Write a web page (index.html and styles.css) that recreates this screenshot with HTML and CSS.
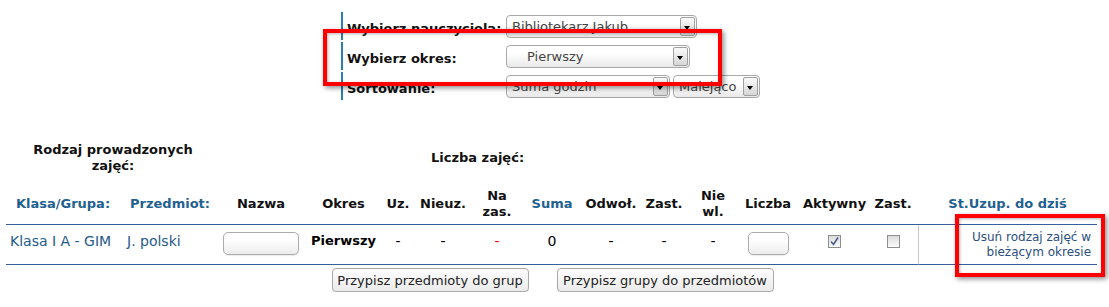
FILE: index.html
```html
<!DOCTYPE html>
<html lang="pl">

<head>
    <meta charset="UTF-8">
    <title>Rodzaje zajęć</title>
    <link rel="stylesheet" href="styles.css">
</head>

<body>
    <!-- Filtry -->
    <div class="filters">
        <div class="filter-label">Wybierz nauczyciela:</div>
        <div class="filter-field">
            <div class="dropdown teacher"><span class="value">Bibliotekarz Jakub</span><span class="arrow"></span></div>
        </div>
        <div class="filter-label">Wybierz okres:</div>
        <div class="filter-field">
            <div class="dropdown period"><span class="value indent">Pierwszy</span><span class="arrow"></span></div>
        </div>
        <div class="filter-label">Sortowanie:</div>
        <div class="filter-field">
            <div class="dropdown sort"><span class="value">Suma godzin</span><span class="arrow"></span></div>
            <div class="dropdown order"><span class="value">Malejąco</span><span class="arrow"></span></div>
        </div>
    </div>

    <table class="lessons">
        <colgroup>
            <col style="width: 114px">
            <col style="width: 100px">
            <col style="width: 82px">
            <col style="width: 83px">
            <col style="width: 26px">
            <col style="width: 64px">
            <col style="width: 44px">
            <col style="width: 66px">
            <col style="width: 52px">
            <col style="width: 54px">
            <col style="width: 44px">
            <col style="width: 66px">
            <col style="width: 67px">
            <col style="width: 50px">
            <col style="width: 179px">
        </colgroup>
        <thead>
            <tr class="group-row">
                <th colspan="2">Rodzaj prowadzonych<br>zajęć:</th>
                <th colspan="9">Liczba zajęć:</th>
                <th colspan="4"></th>
            </tr>
            <tr class="head-row">
                <th class="blue">Klasa/Grupa:</th>
                <th class="blue">Przedmiot:</th>
                <th>Nazwa</th>
                <th>Okres</th>
                <th>Uz.</th>
                <th>Nieuz.</th>
                <th>Na<br>zas.</th>
                <th class="blue">Suma</th>
                <th>Odwoł.</th>
                <th>Zast.</th>
                <th>Nie<br>wl.</th>
                <th>Liczba</th>
                <th>Aktywny</th>
                <th>Zast.</th>
                <th class="blue">St.Uzup. do dziś</th>
            </tr>
        </thead>
        <tbody>
            <tr>
                <td class="group">Klasa I A - GIM</td>
                <td class="subject">J. polski</td>
                <td><input type="text" class="field name-field"></td>
                <td class="bold">Pierwszy</td>
                <td>-</td>
                <td>-</td>
                <td class="red">-</td>
                <td>0</td>
                <td>-</td>
                <td>-</td>
                <td>-</td>
                <td><input type="text" class="field count-field"></td>
                <td>
                    <span class="check">
                        <svg width="11" height="11" viewBox="0 0 11 11"><path d="M2 5.5 L4.5 8.5 L9 1.5" fill="none" stroke="#4a5f8f" stroke-width="1.6"/></svg>
                    </span>
                </td>
                <td><span class="check"></span></td>
                <td class="remove">Usuń rodzaj zajęć w<br>bieżącym okresie</td>
            </tr>
        </tbody>
    </table>

    <div class="actions">
        <button class="wide-btn">Przypisz przedmioty do grup</button>
        <button class="wider-btn">Przypisz grupy do przedmiotów</button>
    </div>

    <!-- Zaznaczenia -->
    <div class="highlight mark-period"></div>
    <div class="highlight mark-remove"></div>
</body>

</html>
```

FILE: styles.css
```css
* {
    box-sizing: border-box;
    margin: 0;
    padding: 0;
}

body {
    font-family: "DejaVu Sans", Verdana, sans-serif;
    font-size: 13px;
    color: #000;
    background: #fff;
    padding-top: 12px;
}

/* Filtry */
.filters {
    display: grid;
    grid-template-columns: 165px 262px;
    grid-auto-rows: 28px;
    row-gap: 2px;
    width: 427px;
    margin: 0 auto;
}

.filter-label {
    display: flex;
    align-items: center;
    padding: 4px 0 0 4px;
    border-left: 2px solid #2a7db5;
    font-weight: bold;
    color: #111;
}

.filter-field {
    display: flex;
    align-items: center;
    gap: 3px;
}

.dropdown {
    display: flex;
    align-items: stretch;
    height: 23px;
    border: 1px solid #a8a8a8;
    border-radius: 4px;
    background: linear-gradient(#fff 35%, #e9e9e9);
    color: #444;
    font-size: 13px;
}

.dropdown .value {
    flex: 1;
    padding-left: 5px;
    line-height: 21px;
    white-space: nowrap;
    overflow: hidden;
}

.dropdown .value.indent {
    padding-left: 20px;
}

.dropdown .arrow {
    position: relative;
    flex: none;
    width: 15px;
    margin: 1px;
    border: 1px solid #a0a0a0;
    border-radius: 2px;
    background: linear-gradient(#fafafa, #d6d6d6);
}

.dropdown .arrow::after {
    content: "";
    position: absolute;
    left: 3px;
    top: 8px;
    border-left: 3.5px solid transparent;
    border-right: 3.5px solid transparent;
    border-top: 4px solid #000;
}

.teacher {
    width: 191px;
}

.period {
    width: 184px;
}

.sort {
    width: 164px;
}

.order {
    width: 87px;
}

/* Tabela */
.lessons {
    width: 1091px;
    margin: 40px 0 0 6px;
    border-collapse: separate;
    border-spacing: 0;
    table-layout: fixed;
}

.lessons th {
    font-weight: bold;
    text-align: center;
    line-height: 16px;
    white-space: nowrap;
    color: #111;
}

.lessons th.blue {
    color: #1f6190;
}

.group-row th {
    height: 44px;
    padding-bottom: 8px;
    vertical-align: middle;
}

.head-row th {
    height: 41px;
    border-bottom: 1px solid #37609a;
    vertical-align: middle;
}

.lessons td {
    height: 40px;
    padding-top: 8px;
    border-bottom: 1px solid #37609a;
    vertical-align: top;
    text-align: center;
    line-height: 16px;
    font-size: 14px;
    white-space: nowrap;
}

.lessons td.group,
.lessons td.subject {
    text-align: left;
    color: #1e5a8a;
}

.lessons td.group {
    padding-left: 4px;
}

.lessons td.subject {
    padding-left: 7px;
}

.lessons td.bold {
    font-weight: bold;
    font-size: 13px;
}

.lessons td.red {
    color: #ff0000;
}

.lessons td.remove {
    padding: 5px 6px 0 0;
    border-left: 1px solid #c8c8c8;
    text-align: right;
    font-size: 12px;
    line-height: 15px;
    color: #2b4f7e;
}

.field {
    display: block;
    height: 23px;
    margin: -1px auto 0;
    border: 1px solid #acacac;
    border-radius: 5px;
    background: linear-gradient(#fff 30%, #ececec);
    box-shadow: 0 1px 1px rgba(0, 0, 0, 0.08);
}

.name-field {
    width: 76px;
}

.count-field {
    width: 41px;
}

.check {
    display: block;
    width: 13px;
    height: 13px;
    margin: 2px auto 0;
    border: 1px solid #8e8e8e;
    background: linear-gradient(#dcdcdc, #fbfbfb);
}

.check svg {
    display: block;
}

/* Przyciski */
.actions {
    display: flex;
    justify-content: center;
    gap: 28px;
    margin-top: 3px;
    padding-right: 4px;
}

.actions button {
    height: 24px;
    padding: 0 4px;
    border: 1px solid #a9a9a9;
    border-radius: 4px;
    background: linear-gradient(#fdfdfd, #ebebeb);
    box-shadow: 0 1px 1px rgba(0, 0, 0, 0.1);
    font-family: "DejaVu Sans", Verdana, sans-serif;
    font-size: 13px;
    white-space: nowrap;
    color: #222;
}

.wide-btn {
    width: 197px;
}

.wider-btn {
    width: 217px;
}

/* Czerwone ramki */
.highlight {
    position: absolute;
    border: 4px solid #f00;
    box-shadow: 2px 2px 5px rgba(0, 0, 0, 0.45), inset 1px 1px 3px rgba(0, 0, 0, 0.3);
}

.mark-period {
    left: 323px;
    top: 29px;
    width: 399px;
    height: 57px;
}

.mark-remove {
    left: 955px;
    top: 214px;
    width: 150px;
    height: 63px;
}
```
